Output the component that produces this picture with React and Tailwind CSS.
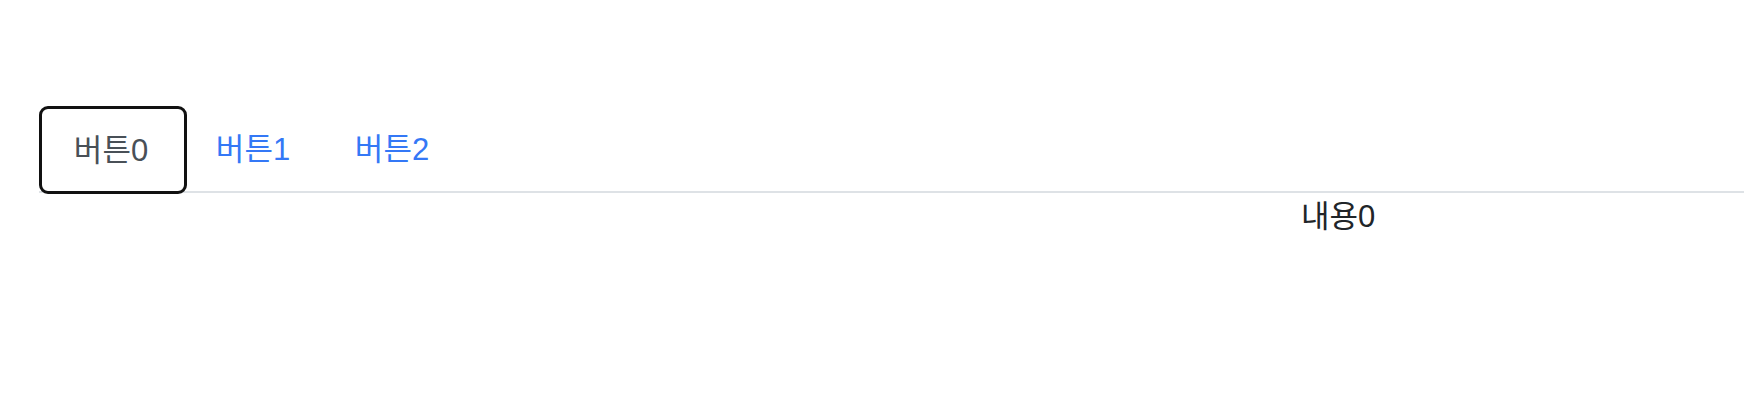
const tabs = [
  { label: '버튼0', width: 'w-[148px]' },
  { label: '버튼1', width: 'w-[132px]' },
  { label: '버튼2', width: 'w-[146px]' },
];

export default function App() {
  const active = 0;
  return (
    <div className="w-[1744px] h-[400px] bg-white pt-[106px] font-['Liberation_Sans','Noto_Sans_CJK_KR',sans-serif]">
      {/* Tab list */}
      <div className="ml-[39px] flex border-b-2 border-[#dee2e6]">
        {tabs.map((tab, i) =>
          i === active ? (
            <button
              key={tab.label}
              className="w-[148px] h-[88px] -mb-[3px] border-[3px] border-[#111111] rounded-[9px] bg-white flex items-center justify-center pt-[3px] pr-[4px] text-[31px] text-[#495057]"
            >
              {tab.label}
            </button>
          ) : (
            <button
              key={tab.label}
              className={`${tab.width} h-[85px] flex items-center justify-center pt-[3px] text-[31px] text-[#3478f6]`}
            >
              {tab.label}
            </button>
          )
        )}
      </div>

      {/* Tab panel */}
      <div className="ml-[1301px] pt-[1px] text-[31px] leading-[1.5] text-[#212529]">내용0</div>
    </div>
  );
}
